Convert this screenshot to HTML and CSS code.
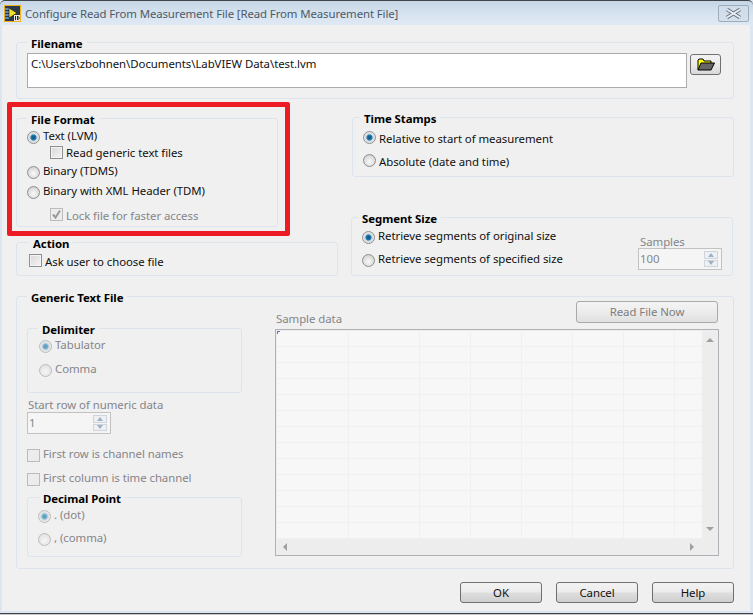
FILE: index.html
```html
<!DOCTYPE html>
<html lang="en">
<head>
<meta charset="utf-8">
<title>Configure Read From Measurement File</title>
<link rel="stylesheet" href="styles.css">
</head>
<body>
<div class="window">
  <header class="titlebar">
    <svg class="app-icon" width="17" height="17" viewBox="0 0 17 17">
      <rect x="0.5" y="0.5" width="16" height="16" fill="#2b3a4a" stroke="#f0b020"/>
      <path d="M1 4h4M1 7h4M1 10h4M1 13h4" stroke="#6fa8e0" stroke-width="1.4"/>
      <path d="M5 3l8 5-8 5z" fill="#f5e020" stroke="#111" stroke-width="0.6"/>
      <rect x="10" y="10" width="6" height="6" fill="#e8e8e8"/>
      <path d="M11.5 11v4M13.5 11v4l2-2-2-2" fill="none" stroke="#222"/>
    </svg>
    <span class="title-text">Configure Read From Measurement File [Read From Measurement File]</span>
    <div class="close-btn">
      <svg width="19" height="11" viewBox="0 0 19 11">
        <path d="M3 1.500l13 8M16 1.500l-13 8" stroke="#66727f" stroke-width="3.800"/>
        <path d="M3 1.500l13 8M16 1.500l-13 8" stroke="#eef2f6" stroke-width="1.800"/>
      </svg>
    </div>
  </header>

  <main class="panel">
    <fieldset class="group filename-group">
      <legend>Filename</legend>
      <div class="filename-row">
        <div class="path-input">C:\Users\zbohnen\Documents\LabVIEW Data\test.lvm</div>
        <div class="browse-btn">
          <svg width="18" height="13" viewBox="0 0 18 13">
            <path d="M1 12V2l1-1h4l1 2h7v2" fill="#ffff00" stroke="#000"/>
            <path d="M1 12h13l3.500-7H4z" fill="#666" stroke="#000"/>
          </svg>
        </div>
      </div>
    </fieldset>

    <div class="middle">
      <div class="left-col">
        <div class="highlight">
          <fieldset class="group format-group">
            <legend>File Format</legend>
            <div class="opt opt-text"><span class="radio on"></span><span>Text (LVM)</span></div>
            <div class="opt opt-sub"><span class="check"></span><span>Read generic text files</span></div>
            <div class="opt opt-tdms"><span class="radio"></span><span>Binary (TDMS)</span></div>
            <div class="opt opt-tdm"><span class="radio"></span><span>Binary with XML Header (TDM)</span></div>
            <div class="opt opt-lock disabled">
              <span class="check checked">
                <svg width="11" height="11" viewBox="0 0 11 11"><path d="M2 5.500l2.500 3L9 1.500" fill="none" stroke="#9a9a9a" stroke-width="2"/></svg>
              </span>
              <span>Lock file for faster access</span>
            </div>
          </fieldset>
        </div>
        <fieldset class="group action-group">
          <legend>Action</legend>
          <div class="opt"><span class="check"></span><span>Ask user to choose file</span></div>
        </fieldset>
      </div>

      <div class="right-col">
        <fieldset class="group time-group">
          <legend>Time Stamps</legend>
          <div class="opt"><span class="radio on"></span><span>Relative to start of measurement</span></div>
          <div class="opt"><span class="radio"></span><span>Absolute (date and time)</span></div>
        </fieldset>
        <fieldset class="group segment-group">
          <legend>Segment Size</legend>
          <div class="segment-body">
            <div class="segment-opts">
              <div class="opt"><span class="radio on"></span><span>Retrieve segments of original size</span></div>
              <div class="opt"><span class="radio"></span><span>Retrieve segments of specified size</span></div>
            </div>
            <div class="samples disabled">
              <div class="field-label">Samples</div>
              <div class="numeric numeric-samples"><span>100</span><span class="spin"><i class="up"></i><i class="down"></i></span></div>
            </div>
          </div>
        </fieldset>
      </div>
    </div>

    <fieldset class="group generic-group">
      <legend>Generic Text File</legend>
      <div class="generic-body">
        <div class="generic-left disabled">
          <fieldset class="group delim-group">
            <legend>Delimiter</legend>
            <div class="opt"><span class="radio on"></span><span>Tabulator</span></div>
            <div class="opt"><span class="radio"></span><span>Comma</span></div>
          </fieldset>
          <div class="field-label start-label">Start row of numeric data</div>
          <div class="numeric numeric-start"><span>1</span><span class="spin"><i class="up"></i><i class="down"></i></span></div>
          <div class="opt first-row"><span class="check"></span><span>First row is channel names</span></div>
          <div class="opt first-col"><span class="check"></span><span>First column is time channel</span></div>
          <fieldset class="group decimal-group">
            <legend>Decimal Point</legend>
            <div class="opt"><span class="radio on"></span><span>. (dot)</span></div>
            <div class="opt"><span class="radio"></span><span>, (comma)</span></div>
          </fieldset>
        </div>
        <div class="generic-right">
          <div class="sample-head disabled">
            <span class="sample-label">Sample data</span>
            <div class="btn btn-off">Read File Now</div>
          </div>
          <div class="table-box">
            <div class="cells">
              <div class="col col-a"><i class="corner"></i></div>
              <div class="col col-b"></div>
              <div class="col"></div>
              <div class="col"></div>
              <div class="col"></div>
              <div class="col"></div>
              <div class="col"></div>
            </div>
            <div class="vscroll"><i class="tri tri-up"></i><i class="tri tri-down"></i></div>
            <div class="hscroll"><i class="tri tri-left"></i><i class="tri tri-right"></i></div>
            <div class="scroll-corner"></div>
          </div>
        </div>
      </div>
    </fieldset>

    <footer class="actions">
      <div class="btn">OK</div>
      <div class="btn">Cancel</div>
      <div class="btn">Help</div>
    </footer>
  </main>
  <div class="window-foot"></div>
</div>
</body>
</html>
```
FILE: styles.css
```css
* { box-sizing: border-box; }
html, body { margin: 0; padding: 0; height: 100%; }
body {
  width: 753px;
  height: 615px;
  overflow: hidden;
  font: 11.4px/14px "Noto Sans", "Open Sans", sans-serif;
  letter-spacing: -0.05px;
  color: #111;
  background: #dbe6f2;
}
.window { display: flex; flex-direction: column; height: 615px; }

.titlebar {
  height: 25px;
  display: flex;
  align-items: center;
  padding: 1px 4px 0 4px;
  border-top: 1px solid #3f454b;
  background: linear-gradient(#c6d6e6, #d8e4f0 60%, #dfe9f4);
  border-radius: 5px 5px 0 0;
}
.app-icon { flex: none; }
.title-text { margin-left: 4px; color: #4c5a68; letter-spacing: -0.1px; }
.close-btn {
  margin-left: auto;
  width: 31px;
  height: 17px;
  border: 1px solid #9dabba;
  border-radius: 2px;
  display: flex;
  align-items: center;
  justify-content: center;
  background: linear-gradient(#cfdce9, #d4e0ec);
}

.panel {
  flex: 1;
  margin: 0 3px 0 2px;
  padding: 9px 16px 0 14px;
  background: #f0f0f0;
}

.group {
  margin: 0;
  padding: 0 0 0 10px;
  min-width: 0;
  border: 1px solid #dde4ec;
  border-radius: 3px;
}
.group > legend {
  padding: 3px 4px 0;
  font-weight: 700;
  color: #000;
  line-height: 14px;
}

.filename-group { padding-bottom: 10px; }
.filename-row { display: flex; align-items: flex-start; margin-top: 2px; }
.path-input {
  width: 660px;
  height: 35px;
  padding: 3px 3px;
  background: #fff;
  border: 1px solid #ababab;
}
.browse-btn {
  width: 31px;
  height: 21px;
  margin: 1px 0 0 3px;
  border: 1px solid #707070;
  border-radius: 3px;
  display: flex;
  align-items: center;
  justify-content: center;
  background: linear-gradient(#f3f3f3, #ebebeb 50%, #d8d8d8);
}

.middle { display: grid; grid-template-columns: 322px 383px; column-gap: 13px; }

.highlight {
  width: 283px;
  margin: 3px 0 0 -9px;
  padding: 3px 7px 4px 4px;
  border: 5px solid #ed1c24;
  border-radius: 2px;
}
.format-group { padding-bottom: 2px; }

.opt { display: flex; align-items: center; height: 16px; white-space: nowrap; }
.radio, .check { flex: none; display: block; }
.radio {
  width: 13px;
  height: 13px;
  margin: 2px 3px 0 0;
  border-radius: 50%;
  border: 1px solid #8f8f8f;
  background: radial-gradient(circle at 50% 60%, #fafafa, #dcdcdc 60%, #c4c4c4);
}
.radio.on { background: radial-gradient(circle, #0f4f7d 0, #1a7ab0 2.5px, #cfd6dc 3.5px, #eee 6px); }
.check {
  width: 13px;
  height: 13px;
  margin: 0 3px 3px 0;
  border: 1px solid #8e8f8f;
  background: linear-gradient(135deg, #d8d8d8, #f4f4f4);
  box-shadow: inset 0 0 0 1px #f4f4f4;
}
.check.checked svg { display: block; margin: 0; }

.opt-text { margin-top: 1px; }
.opt-sub { margin: 1px 0 0 23px; }
.opt-sub .check { margin-bottom: 1px; }
.opt-tdms { margin-top: 2px; }
.opt-tdm { margin-top: 4px; }
.opt-lock { margin: 9px 0 0 23px; }

.disabled, .disabled .opt { color: #85858a; }
.disabled legend { color: #000; }
.disabled .radio { border-color: #bcbcbc; background: radial-gradient(circle at 50% 60%, #f6f6f6, #e6e6e6 60%, #dcdcdc); }
.disabled .radio.on { background: radial-gradient(circle, #4f93b5 0, #7cb4d0 2.5px, #d8dcdf 3.5px, #efefef 6px); }
.disabled .check { border-color: #bcbcbc; background: #ececec; box-shadow: none; }
.generic-left .check { margin: 2px 3px 0 0; }

.action-group { margin-top: -2px; padding: 0 0 5px 12px; }
.action-group .opt { margin-top: 3px; }

.time-group { margin: 10px 0 0 1px; padding: 0 0 6px 10px; }
.time-group > legend { margin-left: -3px; }
.time-group .opt { margin-top: 5px; }
.time-group .opt + .opt { margin-top: 7px; }
.time-group .radio { margin: 0 3px 3px 0; }

.segment-group { margin: 32px 1px 0 0; padding: 0 10px 0 10px; }
.segment-group > legend { margin-left: -4px; }
.segment-body { display: flex; justify-content: space-between; }
.segment-opts { padding-bottom: 8px; }
.segment-opts .opt { margin-top: 2px; }
.segment-opts .opt + .opt { margin-top: 7px; }
.samples { align-self: flex-end; margin-bottom: 5px; }
.field-label { line-height: 14px; }
.samples .field-label { margin: 0 0 -1px 2px; }

.numeric {
  height: 22px;
  padding: 0 3px 0 1px;
  display: flex;
  align-items: center;
  justify-content: space-between;
  border: 1px solid #c2c2c2;
  background: #f5f5f5;
  color: #85858a;
}
.numeric-samples { width: 84px; }
.numeric-start { width: 84px; }
.spin { display: flex; flex-direction: column; gap: 1px; width: 14px; height: 16px; }
.spin i {
  flex: 1;
  border: 1px solid #cfd5db;
  background: #eef1f4;
  display: flex;
  align-items: center;
  justify-content: center;
}
.spin i::after { content: ""; border: 3px solid transparent; }
.spin .up::after { border-bottom: 4px solid #9db0c6; border-top-width: 0; }
.spin .down::after { border-top: 4px solid #9db0c6; border-bottom-width: 0; }

.generic-group { margin-top: 12px; height: 281px; padding: 0 14px 0 10px; }
.generic-group > legend { margin-top: -1px; }
.generic-body { display: grid; grid-template-columns: 215px 444px; column-gap: 33px; }

.delim-group { margin-top: 15px; padding: 0 0 15px 11px; }
.delim-group > legend { margin-left: -1px; }
.delim-group .opt { margin-top: 0; }
.delim-group .opt + .opt { margin-top: 8px; }
.start-label { margin: 5px 0 0 1px; }
.first-row { margin-top: 12px; }
.first-col { margin-top: 8px; }
.decimal-group { margin-top: 3px; padding: 0 0 10px 10px; }
.decimal-group > legend { margin-left: 1px; }
.decimal-group .opt { margin-top: 1px; }
.decimal-group .opt + .opt { margin-top: 7px; }

.generic-right { margin-top: -4px; }
.sample-head { display: flex; justify-content: space-between; padding-right: 1px; }
.sample-label { align-self: flex-end; margin: 0 0 -3px 1px; }

.btn {
  width: 82px;
  height: 21px;
  line-height: 20px;
  text-align: center;
  border: 1px solid #707070;
  border-radius: 3px;
  color: #111;
  background: linear-gradient(#f3f3f3, #ececec 45%, #dddddd 55%, #cfcfcf);
}
.btn-off {
  width: 142px;
  height: 22px;
  border-color: #a9a9a9;
  color: #7d7d82;
  background: linear-gradient(#f4f4f4, #ececec 50%, #e0e0e0);
}

.table-box {
  margin-top: 6px;
  height: 227px;
  padding: 1px;
  display: grid;
  grid-template-columns: 425px 15px;
  grid-template-rows: 208px 15px;
  border: 1px solid #b0b0b6;
  background: #ededed;
}
.cells {
  display: flex;
  background: repeating-linear-gradient(to bottom, #f7f7f7 0 15px, #f0f0f0 15px 16px);
}
.col { width: 51px; flex: none; border-right: 1px solid #f0f0f0; position: relative; }
.col-a { width: 72px; }
.col-b { width: 71px; }
.corner {
  position: absolute;
  left: 0;
  top: 0;
  width: 3px;
  height: 3px;
  border-left: 1px solid #6a6ae0;
  border-top: 1px solid #6a6ae0;
}
.vscroll { display: flex; flex-direction: column; justify-content: space-between; align-items: center; padding: 7px 0 8px; }
.hscroll { display: flex; justify-content: space-between; align-items: center; padding: 0 8px 0 6px; }
.tri { display: block; width: 0; height: 0; border: 4px solid transparent; }
.tri-up { border-bottom: 4px solid #a0a0a0; border-top-width: 0; }
.tri-down { border-top: 4px solid #a0a0a0; border-bottom-width: 0; }
.tri-left { border-right: 4px solid #a0a0a0; border-left-width: 0; }
.tri-right { border-left: 4px solid #a0a0a0; border-right-width: 0; }

.actions { display: flex; justify-content: flex-end; gap: 14px; margin-top: 13px; }

.window-foot {
  height: 4px;
  border-top: 2px solid #dbe6f2;
  background: linear-gradient(#3f4347 0 1px, #c8c8c8 1px);
}
```
